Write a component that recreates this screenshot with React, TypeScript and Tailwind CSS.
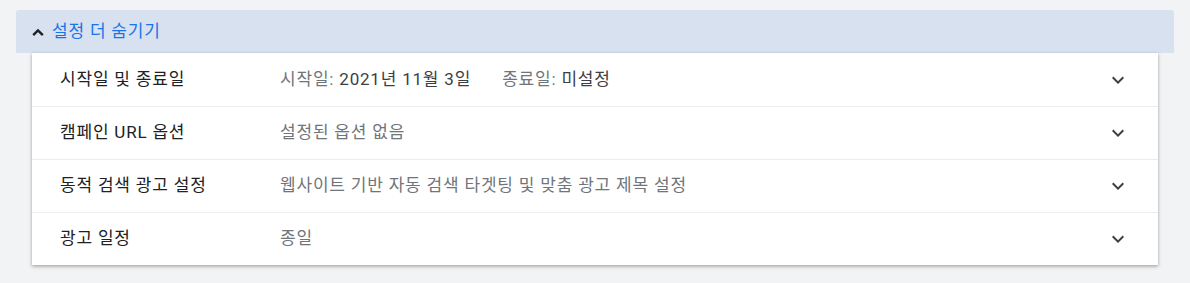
interface SettingRow {
    label: string;
    value: React.ReactNode;
}

const rows: SettingRow[] = [
    {
        label: '시작일 및 종료일',
        value: (
            <div className="flex items-center gap-[31px]">
                <span>
                    <span className="text-[#70757a]">시작일:</span>{' '}
                    <span className="text-[#3c4043]">2021년 11월 3일</span>
                </span>
                <span>
                    <span className="text-[#70757a]">종료일:</span>{' '}
                    <span className="text-[#3c4043]">미설정</span>
                </span>
            </div>
        ),
    },
    { label: '캠페인 URL 옵션', value: '설정된 옵션 없음' },
    { label: '동적 검색 광고 설정', value: '웹사이트 기반 자동 검색 타겟팅 및 맞춤 광고 제목 설정' },
    { label: '광고 일정', value: '종일' },
];

function ExpandMore() {
    return (
        <svg viewBox="0 0 24 24" className="w-6 h-6 fill-[#3c4043]">
            <path d="M16.59 8.59L12 13.17 7.41 8.59 6 10l6 6 6-6z" />
        </svg>
    );
}

function ExpandLess() {
    return (
        <svg viewBox="0 0 20 20" className="w-5 h-5">
            <path d="M5.2 13.2L10 8.4l4.8 4.8" fill="none" stroke="#202124" strokeWidth="2.4" />
        </svg>
    );
}

export default function App() {
    return (
        <div
            className="w-[1190px] h-[283px] bg-[#f1f3f4] pt-[10px] px-4"
            style={{ fontFamily: 'Roboto, "Noto Sans CJK KR", sans-serif' }}
        >
            <div className="h-[43px] bg-[#d7e1ef] rounded-t-[3px] flex items-center pl-[12px] gap-[4px] text-[17px] tracking-[0.8px] text-[#1a73e8]">
                <ExpandLess />
                <span>설정 더 숨기기</span>
            </div>
            <div className="mx-4 bg-white shadow-[0_1px_3px_rgba(60,64,67,0.35),0_2px_4px_rgba(60,64,67,0.15)]">
                {rows.map((row, i) => (
                    <div
                        key={row.label}
                        className={`h-[53px] flex items-center pl-[28px] pr-[28px] text-[17px] tracking-[0.8px] ${i > 0 ? 'border-t border-[#ebedef]' : ''}`}
                    >
                        <div className="w-[220px] text-[#202124]">{row.label}</div>
                        <div className="flex-1 text-[#70757a]">{row.value}</div>
                        <ExpandMore />
                    </div>
                ))}
            </div>
        </div>
    );
}
